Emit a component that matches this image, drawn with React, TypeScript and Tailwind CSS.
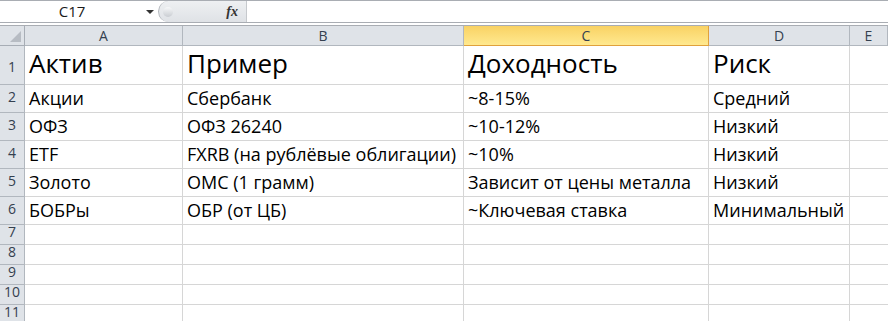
import React from "react";

type Row = { n: number; cells: string[]; h: string; big?: boolean };

const rows: Row[] = [
  { n: 1, cells: ["Актив", "Пример", "Доходность", "Риск"], h: "h-[39px]", big: true },
  { n: 2, cells: ["Акции", "Сбербанк", "~8-15%", "Средний"], h: "h-[28px]" },
  { n: 3, cells: ["ОФЗ", "ОФЗ 26240", "~10-12%", "Низкий"], h: "h-[28px]" },
  { n: 4, cells: ["ETF", "FXRB (на рублёвые облигации)", "~10%", "Низкий"], h: "h-[28px]" },
  { n: 5, cells: ["Золото", "ОМС (1 грамм)", "Зависит от цены металла", "Низкий"], h: "h-[28px]" },
  { n: 6, cells: ["БОБРы", "ОБР (от ЦБ)", "~Ключевая ставка", "Минимальный"], h: "h-[28px]" },
  { n: 7, cells: ["", "", "", ""], h: "h-[20px]" },
  { n: 8, cells: ["", "", "", ""], h: "h-[20px]" },
  { n: 9, cells: ["", "", "", ""], h: "h-[20px]" },
  { n: 10, cells: ["", "", "", ""], h: "h-[20px]" },
  { n: 11, cells: ["", "", "", ""], h: "h-[20px]" },
];

const cols = "grid-cols-[25px_158px_281px_245px_141px_1fr]";

function FormulaBar(): JSX.Element {
  return (
    <div className="flex h-[23px] border-t border-b border-[#a9adb3] bg-white">
      <div className="relative flex w-[158px] items-center justify-center pr-[14px] text-[15px] text-[#1a1a1a]">
        C17
        <span className="absolute right-[4px] top-[9px] h-0 w-0 border-x-[4px] border-t-[4px] border-x-transparent border-t-[#333]" />
      </div>
      <div className="flex w-[88px] items-center rounded-l-full border-l border-[#b3b7bd] bg-gradient-to-b from-[#eef0f2] to-[#dfe2e6] pl-[4px] pr-[8px]">
        <span className="h-[10px] w-[10px] rounded-full bg-gradient-to-b from-[#f7f8f9] to-[#c9cdd2]" />
        <span className="ml-auto font-['Liberation_Serif',serif] text-[14px] font-bold italic text-[#333]">fx</span>
      </div>
      <div className="flex-1 border-l border-[#c6c9cd]" />
    </div>
  );
}

function CornerCell(): JSX.Element {
  return (
    <div className="relative h-full border-r border-b border-[#a7adb5] bg-[#dfe3e8]">
      <svg className="absolute bottom-[3px] right-[3px]" width="11" height="11" viewBox="0 0 11 11">
        <polygon points="11,0 11,11 0,11" fill="#b7bcc3" />
      </svg>
    </div>
  );
}

export default function App(): JSX.Element {
  const letters = ["A", "B", "C", "D", "E"];
  return (
    <div className="h-[321px] w-[888px] overflow-hidden bg-white font-['Open_Sans',sans-serif]">
      <FormulaBar />
      <div className="h-[3px] border-b border-[#a9adb3] bg-white" />
      <div className={`grid ${cols}`}>
        <div className="h-[20px]">
          <CornerCell />
        </div>
        {letters.map((l) =>
          l === "C" ? (
            <div
              key={l}
              className="flex h-[20px] items-center justify-center border-r border-b border-[#e0a13c] bg-gradient-to-b from-[#f9d263] to-[#ffe98f] text-[14px] text-[#34404f]"
            >
              {l}
            </div>
          ) : (
            <div
              key={l}
              className="flex h-[20px] items-center justify-center border-r border-b border-[#b1b7be] bg-[#dfe3e8] text-[14px] text-[#34404f]"
            >
              {l}
            </div>
          )
        )}
        {rows.map((r) => (
          <React.Fragment key={r.n}>
            <div
              className={`flex ${r.h} items-end justify-center border-r border-b border-[#b1b7be] bg-[#dfe3e8] text-[14px] leading-none text-[#34404f] ${r.big ? "pb-[10px]" : r.h === "h-[28px]" ? "pb-[8px]" : "pb-[5px]"}`}
            >
              {r.n}
            </div>
            {r.cells.map((c, i) => (
              <div
                key={i}
                className={`flex ${r.h} items-end overflow-visible whitespace-nowrap border-r border-b border-[#d6d6d6] pl-[4px] leading-none text-black ${r.big ? "pb-[8px] text-[26px]" : "pb-[5px] text-[18px]"}`}
              >
                {c}
              </div>
            ))}
            <div className={`${r.h} border-b border-[#d6d6d6]`} />
          </React.Fragment>
        ))}
      </div>
    </div>
  );
}
